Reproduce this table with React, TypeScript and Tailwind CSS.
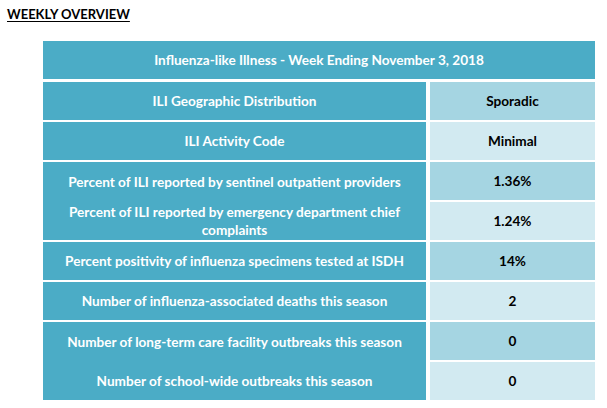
const rows: { label: string; value: string }[] = [
  { label: 'ILI Geographic Distribution', value: 'Sporadic' },
  { label: 'ILI Activity Code', value: 'Minimal' },
  { label: 'Percent of ILI reported by sentinel outpatient providers', value: '1.36%' },
  { label: 'Percent of ILI reported by emergency department chief complaints', value: '1.24%' },
  { label: 'Percent positivity of influenza specimens tested at ISDH', value: '14%' },
  { label: 'Number of influenza-associated deaths this season', value: '2' },
  { label: 'Number of long-term care facility outbreaks this season', value: '0' },
  { label: 'Number of school-wide outbreaks this season', value: '0' },
];

function LabelText({ text }: { text: string }) {
  // the emergency department label wraps in the original
  if (text.endsWith('chief complaints')) {
    return (
      <span>
        Percent of ILI reported by emergency department chief
        <br />
        complaints
      </span>
    );
  }
  return <span>{text}</span>;
}

export default function App() {
  return (
    <div className="min-h-screen bg-white font-['Lato','Liberation_Sans',sans-serif] text-[13.6px] font-bold">
      <div className="px-[7px] pt-[6px]">
        <h2 className="text-[13px] leading-[16px] text-black underline underline-offset-2">WEEKLY OVERVIEW</h2>
      </div>

      <div className="ml-[43px] mt-[19px] grid w-[552px] grid-cols-[383px_165px] gap-x-[4px] gap-y-[2px]">
        <div className="col-span-2 mb-[1px] flex h-[38px] items-center justify-center bg-[#4bacc6] text-white">
          Influenza-like Illness - Week Ending November 3, 2018
        </div>

        {rows.map((row, i) => {
          const merged = i === 2 || i === 6;
          const hidden = i === 3 || i === 7;
          return (
            <div key={row.label} className="contents">
              {merged && (
                <div className="row-span-2 grid grid-rows-2 bg-[#4bacc6] text-white">
                  <div className="flex items-center justify-center px-2 text-center leading-[18px]">
                    <LabelText text={row.label} />
                  </div>
                  <div className="flex items-center justify-center px-2 text-center leading-[18px]">
                    <LabelText text={rows[i + 1].label} />
                  </div>
                </div>
              )}
              {!merged && !hidden && (
                <div className="flex h-[38px] items-center justify-center bg-[#4bacc6] px-2 text-center leading-[18px] text-white">
                  <LabelText text={row.label} />
                </div>
              )}
              <div
                className={`col-start-2 flex h-[38px] items-center justify-center text-black ${
                  i % 2 === 0 ? 'bg-[#a5d5e2]' : 'bg-[#d2eaf1]'
                }`}
              >
                {row.value}
              </div>
            </div>
          );
        })}
      </div>
    </div>
  );
}
